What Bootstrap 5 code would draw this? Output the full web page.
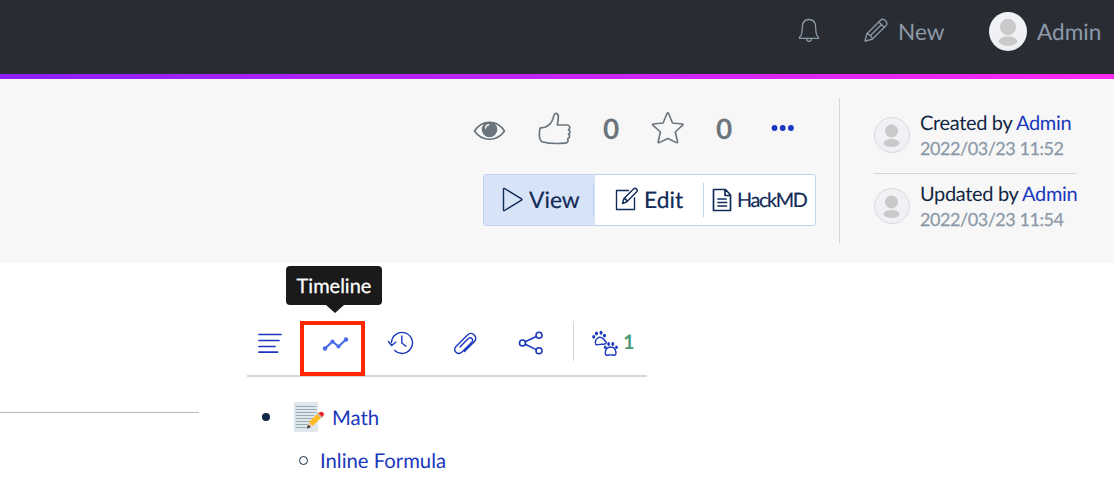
<!DOCTYPE html>
<html lang="en">
<head>
<meta charset="utf-8">
<meta name="viewport" content="width=device-width, initial-scale=1">
<title>Wiki page</title>
<link href="https://cdn.jsdelivr.net/npm/bootstrap@5.3.0/dist/css/bootstrap.min.css" rel="stylesheet">
<style>
body{font-family:Lato,"Liberation Sans",sans-serif;font-size:20px;line-height:24px;color:#112744;background:#fff;overflow:hidden;text-rendering:geometricPrecision}
a{color:#1a37bd;text-decoration:none}
svg{display:block;flex:none;fill:none;stroke:currentColor;stroke-linecap:round;stroke-linejoin:round}
.topbar{height:74px;background:#2a2c34;color:#8c9aa8;padding:0 12px 11px 0;font-size:22.6px}
.rainbow{height:5px;background:linear-gradient(90deg,#8c1ffc,#ff28f5)}
.pagehead{height:184px;background:#f7f7f7}
.avatar{border-radius:50%;background:#f0f1f5;flex:none}
.avatar svg{fill:#c9c9c9;stroke:none;width:100%;height:100%}
.reactions{height:34px;margin-top:32px;color:#6c757d;width:342px}
.tally{font-size:28px;font-weight:700;width:17px;line-height:34px}
.modes{width:333px;height:52px;border:1px solid #c2d1f2;border-radius:3px;margin-top:29px;background:#fff;color:#112b58;font-size:22.8px;-webkit-text-stroke:.2px #112b58}
.modes .active-mode{background:#d7e3f7;width:111px}
.label-text{padding-bottom:2px}
.rule{width:1px;background:#c2d1f2;height:34px}
.authors{width:275px;height:145px;margin-top:19px;border-left:1px solid #d3d5d8;padding-left:34px}
.author{height:49px}
.author .avatar{width:36px;height:36px;border:1px solid #d7d9dd}
.byline{letter-spacing:-.34px;white-space:nowrap}
.stamp{font-size:18px;letter-spacing:-.45px;color:#8c9aa8;padding-top:1px;-webkit-text-stroke:.25px #8c9aa8}
.side{width:400px;margin-left:247px;margin-top:55px}
.tools{height:59px;border-bottom:2px solid #d3d6db;color:#1a37bd}
.marked{width:65px;height:55px;border:4px solid #ff2600;color:#4b6bea;margin-top:3px}
.tip{left:-18px;top:-59px;width:96px;height:39px;background:#1a1a1a;color:#fff;border-radius:4px;line-height:41px;-webkit-text-stroke:.25px #fff}
.tip::after{content:"";position:absolute;left:40px;top:39px;border:9px solid transparent;border-top:8px solid #1a1a1a;border-bottom:0}
.leftline{width:199px;height:1px;background:#b0bac3;margin-top:149px}
.dot{width:8px;height:8px;border-radius:50%;background:#112744}
.ring{width:9px;height:9px;border-radius:50%;border:1px solid #112744}
.entry{font-size:20.3px;padding-top:2px}
</style>
</head>
<body>
<header class="topbar d-flex align-items-center justify-content-end">
  <svg width="22" height="26" viewBox="0 0 22 26" stroke-width="1.3" style="margin:0 43px 4px 0"><path d="M1.500 21.300h19v-1c-2-1.300-2.800-3-2.800-9.500C17.700 5.300 14.900 2.500 11 2.500S4.300 5.300 4.300 10.800c0 6.500-.8 8.200-2.800 9.500zM8.500 21.800c.2 3.300 4.800 3.300 5 0"/></svg>
  <svg width="26" height="26" viewBox="0 0 26 26" stroke-width="1.3" style="margin:0 9px 3px 0"><path d="M2 24l1.700-7L17.500 3.300c3-3 8.500 2.200 5.500 5.300L9.200 22.300zM3.700 17c2.900 0 5.500 2.600 5.500 5.300M15.800 5l5.600 5.500M7.200 18.800L18.300 7.700"/></svg>
  <span style="width:91px">New</span>
  <span class="avatar" style="width:38px;height:39px"><svg viewBox="0 0 38 38"><ellipse cx="19" cy="14.500" rx="8" ry="8.200"/><ellipse cx="19" cy="28.800" rx="9.300" ry="4.700"/></svg></span>
  <span style="margin-left:10px;width:65px;white-space:nowrap">Admin</span>
</header>
<div class="rainbow"></div>
<section class="pagehead d-flex">
  <div style="margin-left:473px;width:366px">
    <div class="reactions d-flex align-items-center">
      <svg width="33" height="34" viewBox="0 0 33 34" stroke-width="1.700"><path d="M1.500 20C9 8.500 24 8.500 31.500 20 24 31 9 31 1.500 20z"/><circle cx="16.500" cy="18.500" r="7.800" fill="currentColor" stroke="none"/><path d="M12.500 17c.3-2 1.300-3 3.200-3.300" stroke="#f7f7f7" stroke-width="1.500"/></svg>
      <svg width="34" height="34" viewBox="0 0 34 34" stroke-width="1.700" style="margin-left:32px"><path d="M2 17.200l5.700-1.200c4-2 6.400-5 7.400-8.700.7-3 1.200-5 2.800-5 2.900 0 3 3.500 1.400 11.700h9.400c3.100 0 4.100 3.200 1.800 4.700 2 1.400 1.900 3.500.1 4.500 1.600 1.500 1.100 3.700-.8 4.500.8 2.700-.5 4.300-3 4.500-8 .6-15 .8-22.800-1.500C2 29.500.6 25 2 17.200z"/></svg>
      <span class="tally" style="margin-left:31px">0</span>
      <svg width="34" height="34" viewBox="0 0 34 34" stroke-width="1.600" style="margin-left:31px"><path d="M16 2.500q.8-1.500 1.600 0L21.500 12l10 1q1 .2.200 1.200L24.200 21l2.400 9.800q0 1.200-1.200.8L16.800 27.500l-8.600 4.100q-1.200.4-1-.8L9.400 21 1.900 14.200q-.8-1 .2-1.200l10-1z"/></svg>
      <span class="tally" style="margin-left:31px">0</span>
      <svg width="24" height="8" viewBox="0 0 24 8" style="margin-left:38px;margin-bottom:1px;color:#1a37bd"><g fill="currentColor" stroke="none"><circle cx="3.500" cy="4" r="2.900"/><circle cx="11.700" cy="4" r="2.900"/><circle cx="19.900" cy="4" r="2.900"/></g></svg>
    </div>
    <div class="modes d-flex align-items-center overflow-hidden" style="margin-left:10px">
      <div class="active-mode h-100 d-flex align-items-center flex-shrink-0">
        <svg width="22" height="26" viewBox="0 0 22 26" stroke-width="1.400" style="margin-left:18px;margin-bottom:3px"><path d="M1.500 3v21q0 1 1 .5l17-10.300q.9-.7 0-1.400L2.500 2.500q-1-.5-1 .5z"/></svg>
        <span class="label-text" style="margin-left:5px;width:64px">View</span><span class="rule"></span>
      </div>
      <svg width="24" height="24" viewBox="0 0 24 24" stroke-width="1.400" style="margin-left:20px;margin-bottom:3px"><path d="M13.500 3.500h-12v19h18V11M7.500 16.500l1.300-4.700L18.500 2c2-2 5 1 3 3l-9.700 9.800zM8.800 11.800c1.800 0 3 1.500 3 3"/></svg>
      <span class="label-text" style="margin-left:5px;width:59px">Edit</span><span class="rule"></span>
      <svg width="21" height="24" viewBox="0 0 21 24" stroke-width="1.700" style="margin-left:8px"><path d="M1.500 1.500h12l5 5.500v15.500h-17zM13 2v5.500h5.500M6 11h8M6 14.500h8.500M6 18h8.500"/></svg>
      <span style="margin-left:4px;font-size:19.800px;letter-spacing:-1.350px">HackMD</span>
    </div>
  </div>
  <aside class="authors">
    <div class="author d-flex" style="margin-top:13px">
      <span class="avatar" style="margin-top:6px"><svg viewBox="0 0 34 34"><ellipse cx="16.500" cy="13" rx="6.500" ry="6.500"/><ellipse cx="16.500" cy="25" rx="8" ry="4"/></svg></span>
      <div style="margin-left:10px"><div class="byline">Created by <a href="#">Admin</a></div><div class="stamp">2022/03/23 11:52</div></div>
    </div>
    <div style="width:202px;height:1px;background:#d3d5d8;margin-top:13px;margin-bottom:8px"></div>
    <div class="author d-flex">
      <span class="avatar" style="margin-top:6px"><svg viewBox="0 0 34 34"><ellipse cx="16.500" cy="13" rx="6.500" ry="6.500"/><ellipse cx="16.500" cy="25" rx="8" ry="4"/></svg></span>
      <div style="margin-left:10px"><div class="byline">Updated by <a href="#">Admin</a></div><div class="stamp">2022/03/23 11:54</div></div>
    </div>
  </aside>
</section>
<main class="d-flex">
  <div style="width:0"><div class="leftline"></div></div>
  <div class="side">
    <div class="tools d-flex align-items-start">
      <svg width="26" height="24" viewBox="0 0 26 24" stroke-width="1.700" style="margin:14px 0 0 10px"><path d="M2 2.500h22M2 8.500h20M2 14.500h16M2 20.200h18.500"/></svg>
      <div class="marked position-relative flex-shrink-0" style="margin-left:17px">
        <svg width="28" height="18" viewBox="0 0 28 18" stroke-width="2.200" style="margin:11px 0 0 18px"><path d="M3 12.500L10.500 5.500 16.500 10.500 24 3.500"/><g fill="currentColor" stroke="none"><circle cx="3" cy="12.500" r="2.200"/><circle cx="10.500" cy="5.500" r="2"/><circle cx="16.500" cy="10.500" r="2"/><circle cx="24" cy="3.500" r="2.200"/></g></svg>
        <div class="tip position-absolute text-center">Timeline</div>
      </div>
      <svg width="27" height="26" viewBox="0 0 27 26" stroke-width="1.400" style="margin:12px 0 0 22px"><path d="M4.500 12.500a10.500 10.500 0 1 1 3.200 8M1.500 11.500l3.200 4 4-3.300M14.800 6v7l4.200 3.200"/></svg>
      <svg width="26" height="26" viewBox="0 0 26 26" stroke-width="1.400" style="margin:12px 0 0 38px"><path d="M12.500 21.500L22 12C27 7 20 .5 15.500 5L4 16.500c-4 4 2 9.500 6 5.500L19.500 12.500c3-3-.7-6.500-3.700-3.500L8 17"/></svg>
      <svg width="28" height="26" viewBox="0 0 28 26" stroke-width="1.600" style="margin:12px 0 0 39px"><circle cx="5.500" cy="13" r="3"/><circle cx="22" cy="5.200" r="3"/><circle cx="22" cy="20.800" r="3"/><path d="M8.200 11.700l11-5.200M8.200 14.300l11 5.300"/></svg>
      <div style="width:1px;height:40px;background:#d3d6db;margin:3px 0 0 28px"></div>
      <svg width="29" height="27" viewBox="0 0 29 27" stroke-width="1.400" style="margin:12px 0 0 17px"><path d="M4.300 12.500c.4-4.500 3.800-6 6.300-4.800 2 .8 2.900 2.600 4.300 4.100 1 2.200-1.700 2.700-4.500 2.300-3 .6-6 2-6.100-1.600z"/><g fill="currentColor" stroke="none"><ellipse cx="2.700" cy="6.800" rx="1.500" ry="1.900"/><ellipse cx="5.500" cy="3.500" rx="1.500" ry="2"/><ellipse cx="10" cy="2.800" rx="1.500" ry="2"/><ellipse cx="13.500" cy="5.600" rx="1.500" ry="1.900"/></g><path d="M14.200 22.500c.6-4.500 3-5.500 5.400-5.500s5 1.200 5.400 5.500c0 4-3 2.400-5.400 2.400s-5.400 1.600-5.400-2.400z"/><g fill="currentColor" stroke="none"><ellipse cx="14.200" cy="17.300" rx="1.300" ry="1.700"/><ellipse cx="17.600" cy="14" rx="1.400" ry="1.900"/><ellipse cx="21.800" cy="14" rx="1.400" ry="1.900"/><ellipse cx="25.500" cy="17.300" rx="1.300" ry="1.700"/></g></svg>
      <span style="margin:12px 0 0 3px;color:#4a9e77;font-weight:700">1</span>
    </div>
    <div class="d-flex align-items-center" style="height:34px;margin-top:23px;padding-left:15px">
      <span class="dot"></span>
      <svg width="32" height="32" viewBox="0 0 32 32" style="margin-left:23px"><path d="M1 1h24v30H1z" fill="#e1e8ed" stroke="none"/><path d="M3 5.500h20M3 8.500h20M3 11.500h20M3 14.500h18M3 17.500h17M3 20.500h14M3 23.500h12M3 26.500h10" stroke="#9aabb8" stroke-width="1"/><path d="M14.500 26.500l2-6L26 11l4 4-9.800 9.500z" fill="#ffbd22" stroke="none"/><path d="M14.500 26.800l1.900-5.500 3.800 3.500z" fill="#f3c99b" stroke="none"/><path d="M14.500 26.800l.8-2.500 1.700 1.500z" fill="#292f33" stroke="#292f33" stroke-width=".8"/><path d="M24.500 12.500l4 4" stroke="#b7c5d0" stroke-width="1.500"/><path d="M25.500 12.500q2-3 4.500-1.200 2.200 2.200-.8 4.700z" fill="#ea2633" stroke="none"/></svg>
      <a class="entry" href="#" style="margin-left:7px">Math</a>
    </div>
    <div class="d-flex align-items-center" style="height:34px;margin-top:9px;padding-left:52px">
      <span class="ring"></span><a class="entry" href="#" style="margin-left:12px">Inline Formula</a>
    </div>
  </div>
</main>
<script src="https://cdn.jsdelivr.net/npm/bootstrap@5.3.0/dist/js/bootstrap.bundle.min.js"></script>
</body>
</html>
